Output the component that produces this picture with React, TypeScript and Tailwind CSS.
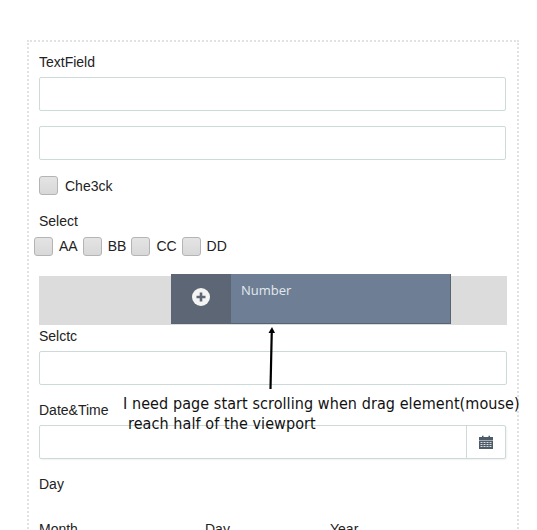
const options = ["AA", "BB", "CC", "DD"];

function Box() {
    return (
        <span className="h-[19px] w-[19px] shrink-0 rounded-[3px] border border-[#b4b4b4] bg-gradient-to-b from-[#e4e4e4] to-[#d8d8d8]" />
    );
}

function Field() {
    return <div className="h-[34px] rounded-[2px] border border-[#cddada] bg-white" />;
}

export default function App() {
    return (
        <div className="relative h-[530px] w-[537px] overflow-hidden bg-white font-['Liberation_Sans',sans-serif] text-[14px] text-[#222]">
            <div className="ml-[27px] mt-[40px] h-[520px] w-[492px] border-2 border-b-0 border-dotted border-[#e2e2e2] pl-[10px]">
                {/* TEXT FIELDS */}
                <div className="mr-[11px]">
                    <div className="mt-[12px] h-[16px] leading-[16px]">TextField</div>
                    <div className="mt-[7px]">
                        <Field />
                    </div>
                    <div className="mt-[15px]">
                        <Field />
                    </div>
                    <div className="mt-[15px] flex h-[20px] items-center gap-[7px]">
                        <Box />
                        <span className="pt-[2px]">Che3ck</span>
                    </div>
                    <div className="mt-[18px] h-[16px] leading-[16px]">Select</div>
                    <div className="-ml-[5px] mt-[7px] flex h-[20px] items-center">
                        {options.map((o) => (
                            <div key={o} className="mr-[5px] flex items-center gap-[6px]">
                                <Box />
                                <span>{o}</span>
                            </div>
                        ))}
                    </div>
                </div>

                {/* DROP PLACEHOLDER */}
                <div className="relative mr-[10px] mt-[20px] h-[49px] bg-[#dcdcdc]">
                    <div className="absolute left-[132px] top-[-2px] flex h-[50px] w-[280px] border-b border-r border-[#596270] bg-[#6e7f95]">
                        <div className="flex h-full w-[60px] items-center justify-center bg-[#5d6674] pb-[3px]">
                            <svg width="18" height="18" viewBox="0 0 18 18">
                                <circle cx="9" cy="9" r="9" fill="#f4f4f4" />
                                <path d="M9 4.5v9M4.5 9h9" stroke="#5d6674" strokeWidth="2.6" />
                            </svg>
                        </div>
                        <div className="pl-[10px] pt-[7px] font-['Open_Sans',sans-serif] text-[13px] leading-[19px] text-[#e4e8ec]">
                            Number
                        </div>
                    </div>
                </div>

                {/* LOWER FIELDS */}
                <div className="mr-[10px]">
                    <div className="mt-[3px] h-[16px] leading-[16px]">Selctc</div>
                    <div className="mt-[7px]">
                        <Field />
                    </div>
                    <div className="mt-[17px] h-[16px] leading-[16px]">Date&amp;Time</div>
                    <div className="mr-px mt-[7px] flex h-[34px] justify-end rounded-[2px] border border-[#cddada] bg-white shadow-[1px_1px_2px_rgba(0,0,0,0.06)]">
                        <div className="flex w-[39px] items-center justify-center border-l border-[#cddada]">
                            <svg width="14" height="14" viewBox="0 0 14 14">
                                <path d="M0 2h3V0.8h1.5V2h5V0.8H11V2h3v3H0z" fill="#4e5b68" />
                                <path d="M0 5.5h14V14H0z" fill="#4e5b68" />
                                <path
                                    d="M1.5 7h2v1h-2zM4.5 7h2v1h-2zM7.5 7h2v1h-2zM10.5 7h2v1h-2zM1.5 9h2v1h-2zM4.5 9h2v1h-2zM7.5 9h2v1h-2zM10.5 9h2v1h-2zM1.5 11h2v1h-2zM4.5 11h2v1h-2zM7.5 11h2v1h-2zM10.5 11h2v1h-2z"
                                    fill="#d5dbe0"
                                />
                            </svg>
                        </div>
                    </div>
                    <div className="mt-[17px] h-[16px] leading-[16px]">Day</div>
                    <div className="mt-[29px] flex h-[16px] leading-[16px]">
                        <span className="w-[166px]">Month</span>
                        <span className="w-[125px]">Day</span>
                        <span>Year</span>
                    </div>
                </div>
            </div>

            {/* ANNOTATION OVER THE PAGE */}
            <svg className="absolute left-[264px] top-[325px]" width="14" height="65" viewBox="0 0 14 65">
                <path d="M6.5 64 L7.8 5" stroke="#000" strokeWidth="2.2" fill="none" />
                <path d="M4.5 8 L8 2 L11 8 Z" fill="#000" />
            </svg>
            <div className="absolute left-[123px] top-[394px] whitespace-nowrap font-['DejaVu_Sans_Condensed','DejaVu_Sans',sans-serif] text-[16px] leading-[20px] tracking-[0.08px] text-[#111]">
                <div>I need page start scrolling when drag element(mouse)</div>
                <div className="pl-[5px]">reach half of the viewport</div>
            </div>
        </div>
    );
}
